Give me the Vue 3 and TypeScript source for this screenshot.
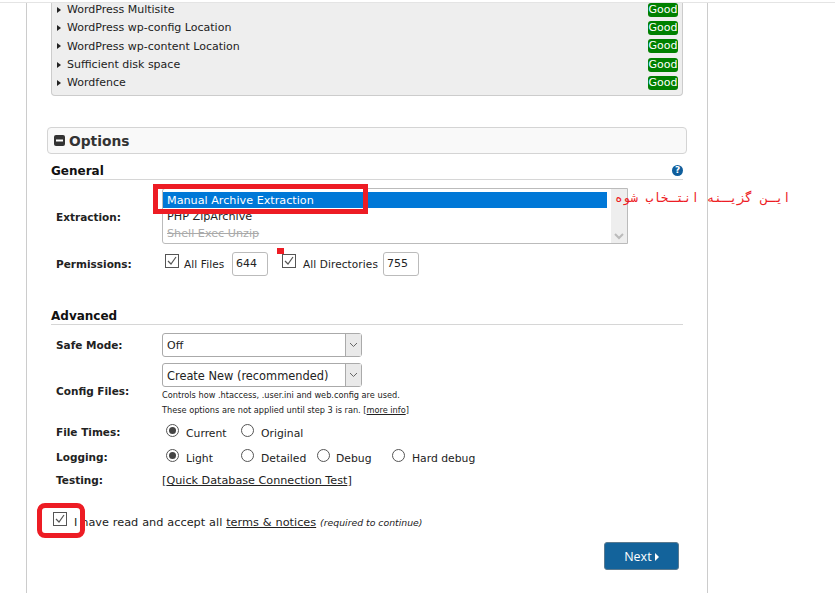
<script setup lang="ts">
const checks: string[] = [
  'WordPress Multisite',
  'WordPress wp-config Location',
  'WordPress wp-content Location',
  'Sufficient disk space',
  'Wordfence',
]
</script>

<template>
  <div class="shell">
    <main class="page">
      <section class="panel">
        <div class="checks">
          <div v-for="c in checks" :key="c" class="check">
            <span class="tri"></span>
            <span class="check-name">{{ c }}</span>
            <span class="good">Good</span>
          </div>
        </div>
      </section>

      <section class="form">
        <header class="options-head">
          <svg class="minus" width="11" height="11" viewBox="0 0 11 11">
            <rect width="11" height="11" rx="2" fill="#333" />
            <rect x="2" y="4.5" width="7" height="2" fill="#fff" />
          </svg>
          <span>Options</span>
        </header>

        <div class="sub general">
          <span>General</span>
          <span class="help">?</span>
        </div>

        <div class="row extraction">
          <label class="lbl">Extraction:</label>
          <div class="listbox">
            <div class="opts">
              <div class="opt sel">Manual Archive Extraction</div>
              <div class="opt">PHP ZipArchive</div>
              <div class="opt off">Shell Exec Unzip</div>
            </div>
            <div class="scroll">
              <svg width="10" height="7" viewBox="0 0 10 7"><path d="M1 1l4 4 4-4" fill="none" stroke="#bbb" stroke-width="2" /></svg>
            </div>
          </div>
        </div>

        <div class="row perms">
          <label class="lbl">Permissions:</label>
          <div class="perm-items">
            <svg class="cb" width="14" height="14" viewBox="0 0 14 14"><rect x=".5" y=".5" width="13" height="13" fill="#fff" stroke="#555" /><path d="M3 7l3 3 5-7" fill="none" stroke="#555" stroke-width="1.2" /></svg>
            <span class="t t1">All Files</span>
            <span class="num">644</span>
            <svg class="cb cb2" width="14" height="14" viewBox="0 0 14 14"><rect x=".5" y=".5" width="13" height="13" fill="#fff" stroke="#555" /><path d="M3 7l3 3 5-7" fill="none" stroke="#555" stroke-width="1.2" /></svg>
            <span class="t t2">All Directories</span>
            <span class="num">755</span>
          </div>
        </div>

        <div class="sub advanced"><span>Advanced</span></div>

        <div class="row safe">
          <label class="lbl">Safe Mode:</label>
          <div class="select">
            <span class="val">Off</span>
            <span class="arrow"><svg width="9" height="6" viewBox="0 0 9 6"><path d="M1 1l3.5 3.5L8 1" fill="none" stroke="#666" /></svg></span>
          </div>
        </div>

        <div class="row config">
          <label class="lbl">Config Files:</label>
          <div class="config-col">
            <div class="select">
              <span class="val">Create New (recommended)</span>
              <span class="arrow"><svg width="9" height="6" viewBox="0 0 9 6"><path d="M1 1l3.5 3.5L8 1" fill="none" stroke="#666" /></svg></span>
            </div>
            <p class="note n1">Controls how .htaccess, .user.ini and web.config are used.</p>
            <p class="note n2">These options are not applied until step 3 is ran. [<a>more info</a>]</p>
          </div>
        </div>

        <div class="row times">
          <label class="lbl">File Times:</label>
          <div class="radios">
            <span class="radio slot-a on"></span><span class="rt ra">Current</span>
            <span class="radio"></span><span class="rt">Original</span>
          </div>
        </div>

        <div class="row logging">
          <label class="lbl">Logging:</label>
          <div class="radios">
            <span class="radio slot-a on"></span><span class="rt ra">Light</span>
            <span class="radio"></span><span class="rt rb">Detailed</span>
            <span class="radio"></span><span class="rt rc">Debug</span>
            <span class="radio"></span><span class="rt">Hard debug</span>
          </div>
        </div>

        <div class="row testing">
          <label class="lbl">Testing:</label>
          <span class="test-link">[<a>Quick Database Connection Test</a>]</span>
        </div>

        <div class="accept">
          <svg class="cb" width="14" height="14" viewBox="0 0 14 14"><rect x=".5" y=".5" width="13" height="13" fill="#fff" stroke="#555" /><path d="M3 7l3 3 5-7" fill="none" stroke="#555" stroke-width="1.2" /></svg>
          <span class="accept-t">I have read and accept all <a>terms &amp; notices</a> <em>(required to continue)</em></span>
        </div>

        <div class="actions">
          <button class="next" type="button">Next <i class="next-tri"></i></button>
        </div>
      </section>

      <div class="mark-box"></div>
      <div class="mark-dot"></div>
      <div class="mark-check"></div>
      <div class="mark-text" dir="rtl">ایـن گزیـنه  انتـخاب شوه</div>
    </main>
  </div>
</template>

<style>
html, body { margin: 0; background: #fff; overflow: hidden; }
</style>

<style scoped>
.shell {
  height: 593px;
  overflow: hidden;
  padding-top: 2px;
  box-sizing: border-box;
  background: #fff;
  position: relative;
  font-family: "DejaVu Sans", Verdana, sans-serif;
  font-size: 11px;
  color: #222;
}
.shell::before {
  content: "";
  position: absolute;
  left: 0;
  right: 0;
  top: 2px;
  height: 1px;
  background: #e4e4e4;
}
.page {
  position: relative;
  margin: 1px 0 0 26px;
  width: 680px;
  height: 590px;
  border-left: 1px solid #ccc;
  border-right: 1px solid #ccc;
}
.panel {
  margin: 0 24px 0 24px;
  height: 93px;
  box-sizing: border-box;
  background: #eee;
  border: 1px solid #ccc;
  border-top: 0;
  border-radius: 0 0 4px 4px;
  overflow: hidden;
}
.checks { margin-top: -2.5px; }
.check {
  height: 18.3px;
  display: flex;
  align-items: center;
}
.tri {
  width: 0;
  height: 0;
  margin-left: 5px;
  border-left: 4px solid #222;
  border-top: 3px solid transparent;
  border-bottom: 3px solid transparent;
}
.check-name { margin-left: 6px; }
.good {
  margin-left: auto;
  margin-right: 4px;
  width: 30px;
  height: 14px;
  line-height: 14px;
  text-align: center;
  background: #008000;
  color: #fff;
  border-radius: 3px;
}
.form { margin: 0 24px 0 24px; }
.options-head {
  margin: 31px -4px 0 -4px;
  height: 27px;
  box-sizing: border-box;
  background: #f9f9f9;
  border: 1px solid #d4d4d4;
  border-radius: 4px;
  display: flex;
  align-items: center;
  font-size: 13.8px;
  font-weight: 700;
  color: #333;
}
.minus { margin: 0 4px 0 6px; }
.sub {
  display: flex;
  justify-content: space-between;
  align-items: center;
  height: 26px;
  box-sizing: border-box;
  border-bottom: 1px solid #d6d6d6;
  font-size: 12px;
  font-weight: 700;
  color: #111;
}
.general { padding-top: 8px; }
.help {
  width: 11px;
  height: 11px;
  border-radius: 50%;
  background: #0f5e9c;
  color: #fff;
  font-size: 9px;
  line-height: 11px;
  text-align: center;
}
.row { display: flex; align-items: center; }
.lbl {
  width: 111px;
  flex: none;
  padding-left: 5px;
  box-sizing: border-box;
  font-weight: 700;
  font-size: 10.5px;
  color: #222;
}
.extraction { margin-top: 8px; }
.extraction .lbl { padding-top: 1px; }
.listbox {
  width: 466px;
  height: 56px;
  box-sizing: border-box;
  border: 1px solid #bbb;
  border-radius: 3px 0 0 3px;
  display: flex;
  background: #fff;
  font-size: 11.2px;
}
.opts { flex: 1; padding-top: 3px; }
.opt { height: 16.5px; line-height: 17px; padding-left: 4px; color: #222; }
.sel { background: #0078d7; color: #fff; height: 16px; }
.off { color: #aaa; text-decoration: line-through; }
.scroll {
  width: 16px;
  margin-left: 4px;
  background: #eee;
  display: flex;
  align-items: flex-end;
  justify-content: center;
  padding-bottom: 3px;
  box-sizing: border-box;
}
.perms { margin-top: 8px; }
.perm-items { display: flex; align-items: center; height: 24px; }
.cb { display: block; flex: none; }
.perm-items .cb { margin: -6px 0 0 3px; }
.perm-items .cb2 { margin-left: 14px; }
.t { margin-left: 5px; font-size: 10.5px; letter-spacing: 0.01em; white-space: nowrap; }
.t1 { width: 42px; }
.t2 { width: 74px; margin-left: 7px; }
.num {
  margin-left: 6px;
  width: 36px;
  height: 24px;
  line-height: 22px;
  box-sizing: border-box;
  border: 1px solid #bbb;
  border-radius: 3px;
  padding-left: 3px;
  background: #fff;
}
.advanced { margin-top: 25px; height: 24px; padding-top: 6px; }
.safe { margin-top: 8px; }
.select {
  width: 200px;
  height: 24px;
  box-sizing: border-box;
  border: 1px solid #aaa;
  border-radius: 3px;
  display: flex;
  align-items: center;
  background: #fff;
  font-size: 11.4px;
}
.safe .select { font-size: 11px; }
.val { flex: 1; padding-left: 4px; }
.config .val { padding-top: 2px; }
.arrow {
  width: 16px;
  height: 100%;
  background: #e9e9e9;
  border-left: 1px solid #aaa;
  display: flex;
  align-items: center;
  justify-content: center;
  box-sizing: border-box;
}
.config { margin-top: 6px; }
.config-col { display: flex; flex-direction: column; }
.note { margin: 0; font-size: 8.2px; line-height: 15px; color: #222; white-space: nowrap; }
.n1 { margin-top: 1px; }
a { text-decoration: underline; color: #222; }
.radios { display: flex; align-items: center; height: 14px; }
.radio {
  width: 13px;
  height: 13px;
  box-sizing: border-box;
  border: 1px solid #555;
  border-radius: 50%;
  background: #fff;
  flex: none;
  position: relative;
  margin-top: -3px;
}
.slot-a { margin-left: 4px; }
.on::after {
  content: "";
  position: absolute;
  inset: 2px;
  border-radius: 50%;
  background: #444;
}
.rt { margin-left: 7px; font-size: 10.8px; margin-top: 3px; white-space: nowrap; }
.ra { width: 55px; }
.rb { width: 56px; }
.rc { width: 56px; margin-left: 6px; }
.times { margin-top: 7px; }
.logging { margin-top: 11px; }
.testing { margin-top: 9px; }
.test-link { font-size: 11.2px; white-space: nowrap; padding-top: 1px; }
.accept {
  display: flex;
  align-items: flex-start;
  margin: 25px 0 0 2px;
  height: 20px;
}
.accept-t {
  margin-left: 7px;
  font-size: 11.3px;
  margin-top: 4px;
  white-space: nowrap;
  word-spacing: 0.3px;
}
.accept-t em { font-size: 9.3px; word-spacing: 0; }
.actions {
  display: flex;
  justify-content: flex-end;
  margin: 10px 4px 0 0;
}
.next {
  width: 75px;
  height: 28px;
  background: #13639b;
  border: 1px solid #5a7a90;
  border-radius: 3px;
  color: #fff;
  font-family: "Open Sans", sans-serif;
  font-size: 12.5px;
  padding: 1px 0 0;
}
.next-tri {
  display: inline-block;
  border-left: 4px solid #fff;
  border-top: 4px solid transparent;
  border-bottom: 4px solid transparent;
}
.mark-box {
  position: absolute;
  left: 126px;
  top: 181px;
  width: 215px;
  height: 30px;
  box-sizing: border-box;
  border: 5px solid #ed1c24;
}
.mark-dot {
  position: absolute;
  left: 250px;
  top: 245px;
  width: 7px;
  height: 6px;
  background: #ed1c24;
}
.mark-check {
  position: absolute;
  left: 10px;
  top: 500px;
  width: 48px;
  height: 35px;
  box-sizing: border-box;
  border: 5px solid #ed1c24;
  border-radius: 8px;
}
.mark-text {
  position: absolute;
  left: 588px;
  top: 187px;
  width: 176px;
  color: #ed1c24;
  font-family: "DejaVu Sans Mono", "DejaVu Sans", monospace;
  font-size: 12.7px;
  white-space: pre;
  text-align: left;
}
</style>
